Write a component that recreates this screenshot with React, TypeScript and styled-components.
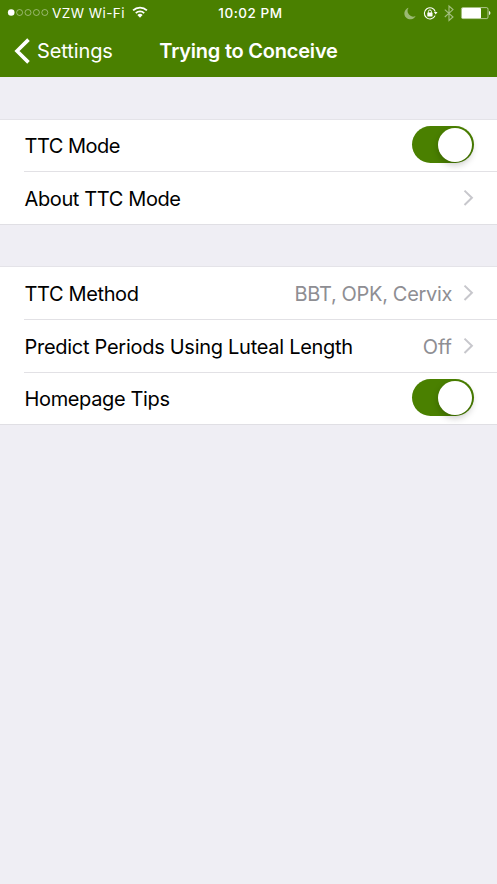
import React from 'react';
import styled, { createGlobalStyle } from 'styled-components';

const GlobalStyle = createGlobalStyle`
  * { box-sizing: border-box; }
  body { margin: 0; background: #efeef4; font-family: Inter, sans-serif; color: #000; }
`;

const Screen = styled.main`
  min-height: 884px;
  background: #efeef4;
`;

const Header = styled.header`
  height: 77px;
  background: #4a8000;
  color: #fff;
`;

const StatusBar = styled.div`
  height: 25px;
  display: grid;
  grid-template-columns: 1fr auto 1fr;
  align-items: center;
  padding: 0 6px 0 7px;
  font-size: 13.5px;
  line-height: 25px;
`;

const Carrier = styled.div`
  display: flex;
  align-items: center;
`;

const StatusText = styled.span<{ $spacing: number; $weight?: number }>`
  padding-top: 1px;
  letter-spacing: ${p => p.$spacing}px;
  font-weight: ${p => p.$weight ?? 400};
  white-space: nowrap;
`;

const Clock = styled(StatusText)`
  padding-left: 3px;
`;

const Dots = styled.svg`
  width: 42px;
  height: 10px;
  margin-right: 3px;
`;

const Wifi = styled.svg`
  width: 16px;
  height: 12px;
  margin: -2px 0 0 7px;
`;

const StatusIcons = styled.svg`
  justify-self: end;
  width: 88px;
  height: 25px;
`;

const NavBar = styled.nav`
  height: 52px;
  display: grid;
  grid-template-columns: 1fr auto 1fr;
  align-items: center;
  padding-left: 14px;
`;

const Back = styled.a`
  display: flex;
  align-items: center;
  font-size: 20px;
  letter-spacing: -0.1px;
`;

const BackIcon = styled.svg`
  width: 17px;
  height: 26px;
  margin-right: 6px;
`;

const Title = styled.h1`
  margin: 0 14px 0 0;
  font-size: 20px;
  font-weight: 600;
  letter-spacing: -0.22px;
  white-space: nowrap;
`;

const Group = styled.section`
  margin-top: 42px;
  background: #fff;
  border-top: 1px solid #e4e3e8;
  border-bottom: 1px solid #e0dfe4;

  & + & { margin-top: 41px; }
`;

const Row = styled.div<{ $height: number }>`
  height: ${p => p.$height}px;
  margin-left: 24px;
  padding-right: 23px;
  display: flex;
  align-items: center;
  font-size: 20px;
  line-height: 24px;

  & + & { border-top: 1px solid #e2e1e5; }
`;

const Label = styled.span<{ $spacing: number; $drop?: number }>`
  flex: 1;
  padding: ${p => p.$drop ?? 0}px 0 0 0.5px;
  letter-spacing: ${p => p.$spacing}px;
  white-space: nowrap;
`;

const Value = styled.span<{ $spacing: number }>`
  color: #8e8e93;
  padding-top: 2px;
  letter-spacing: ${p => p.$spacing}px;
  margin-right: 11px;
`;

const ChevronSvg = styled.svg`
  width: 11px;
  height: 18px;
`;

const Switch = styled.button`
  width: 62px;
  height: 37px;
  margin-top: -2px;
  padding: 1.5px 2.5px 1.5px 2px;
  border: 0;
  border-radius: 19px;
  background: #4a8000;
  display: flex;
  justify-content: flex-end;
`;

const Knob = styled.span`
  width: 34px;
  height: 34px;
  border-radius: 50%;
  background: #fff;
  box-shadow: 0 3px 7px rgba(0, 0, 0, 0.22);
`;

const Chevron = () => (
  <ChevronSvg viewBox="0 0 11 18">
    <path d="M1.5 1.6 8.9 8.8 1.5 16" fill="none" stroke="#c7c7cc" strokeWidth="2" />
  </ChevronSvg>
);

const Toggle = ({ label }: { label: string }) => (
  <Switch role="switch" aria-checked="true" aria-label={label}><Knob /></Switch>
);

export default function App() {
  return (
    <>
      <GlobalStyle />
      <Screen>
        <Header>
          <StatusBar>
            <Carrier>
              <Dots viewBox="0 0 42 10">
                <circle cx="4.2" cy="4.5" r="3.3" fill="#fff" />
                {[12.6, 21, 29.4, 37.8].map(x => (
                  <circle key={x} cx={x} cy="4.5" r="3" fill="none" stroke="#fff" strokeOpacity=".6" strokeWidth=".7" />
                ))}
              </Dots>
              <StatusText $spacing={0.45}>VZW Wi-Fi</StatusText>
              <Wifi viewBox="0 0 16 12">
                <g fill="none" stroke="#fff" strokeWidth="1.8">
                  <path d="M1.1 4.4a9.9 9.9 0 0 1 13.8 0" />
                  <path d="M3.8 7.1a6.1 6.1 0 0 1 8.4 0" />
                </g>
                <path d="M8 11.7 5.4 9a3.8 3.8 0 0 1 5.2 0Z" fill="#fff" />
              </Wifi>
            </Carrier>
            <Clock $spacing={0.55} $weight={500}>10:02 PM</Clock>
            <StatusIcons viewBox="403 0 88 25">
              <path d="M408.6 6.8a5.6 5.6 0 0 0 7 8.2a5.9 5.9 0 1 1-7-8.2Z" fill="#fff" opacity=".45" />
              <path d="M435.3 10.6a5.6 5.6 0 1 0-.2 4" fill="none" stroke="#fff" strokeWidth="1.1" />
              <path d="M433.9 10.9h3.6l-1.8 2.5Z" fill="#fff" />
              <rect x="427.3" y="11.6" width="5.2" height="3.8" rx=".4" fill="#fff" />
              <path d="M428.4 11.8v-1.3a1.5 1.5 0 0 1 3 0v1.3" fill="none" stroke="#fff" strokeWidth="1" />
              <path d="m444.8 8.6 8.2 7.4-4 3.5V5l4 3.6-8.2 7.4" fill="none" stroke="#fff" strokeWidth="1.1" opacity=".5" />
              <rect x="461.4" y="6.6" width="26.6" height="11" rx="1.5" fill="none" stroke="#fff" strokeWidth=".8" opacity=".7" />
              <rect x="462" y="7" width="19" height="10.3" rx=".8" fill="#fff" />
              <path d="M489.1 9.9c1.7.5 1.7 3.6 0 4.1Z" fill="#fff" />
            </StatusIcons>
          </StatusBar>
          <NavBar>
            <Back>
              <BackIcon viewBox="0 0 17 26">
                <path d="M14.5 1.6 3 13l11.5 11.4" fill="none" stroke="#fff" strokeWidth="3.6" />
              </BackIcon>
              Settings
            </Back>
            <Title>Trying to Conceive</Title>
          </NavBar>
        </Header>
        <Group>
          <Row $height={51}>
            <Label $spacing={-0.5}>TTC Mode</Label>
            <Toggle label="TTC Mode" />
          </Row>
          <Row $height={53}>
            <Label $spacing={-0.38} $drop={2}>About TTC Mode</Label>
            <Chevron />
          </Row>
        </Group>
        <Group>
          <Row $height={52}>
            <Label $spacing={-0.37} $drop={2}>TTC Method</Label>
            <Value $spacing={-0.33}>BBT, OPK, Cervix</Value>
            <Chevron />
          </Row>
          <Row $height={53}>
            <Label $spacing={-0.28} $drop={2}>Predict Periods Using Luteal Length</Label>
            <Value $spacing={0}>Off</Value>
            <Chevron />
          </Row>
          <Row $height={52}>
            <Label $spacing={-0.36}>Homepage Tips</Label>
            <Toggle label="Homepage Tips" />
          </Row>
        </Group>
      </Screen>
    </>
  );
}
